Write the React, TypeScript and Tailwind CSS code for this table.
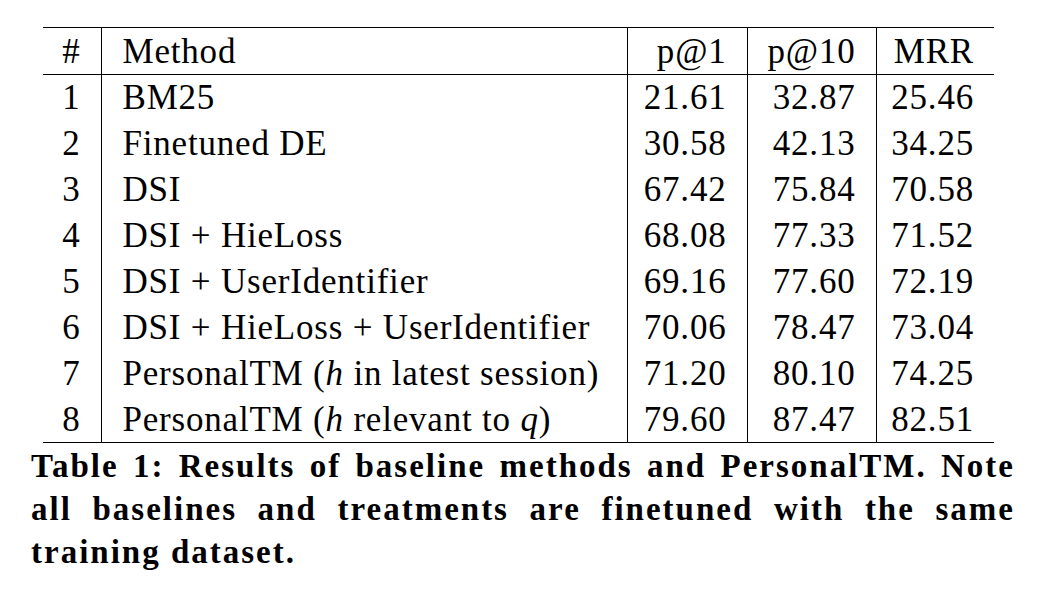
const rows = [
  { n: "1", method: <>BM25</>, p1: "21.61", p10: "32.87", mrr: "25.46" },
  { n: "2", method: <>Finetuned DE</>, p1: "30.58", p10: "42.13", mrr: "34.25" },
  { n: "3", method: <>DSI</>, p1: "67.42", p10: "75.84", mrr: "70.58" },
  { n: "4", method: <>DSI + HieLoss</>, p1: "68.08", p10: "77.33", mrr: "71.52" },
  { n: "5", method: <>DSI + UserIdentifier</>, p1: "69.16", p10: "77.60", mrr: "72.19" },
  { n: "6", method: <>DSI + HieLoss + UserIdentifier</>, p1: "70.06", p10: "78.47", mrr: "73.04" },
  {
    n: "7",
    method: <>PersonalTM (<i>h</i> in latest session)</>,
    p1: "71.20",
    p10: "80.10",
    mrr: "74.25",
  },
  {
    n: "8",
    method: <>PersonalTM (<i>h</i> relevant to <i>q</i>)</>,
    p1: "79.60",
    p10: "87.47",
    mrr: "82.51",
  },
];

export default function App() {
  return (
    <div className="w-[1042px] h-[600px] bg-white text-black [font-family:'Liberation_Serif',serif] pt-[27px] pl-[31px]">
      <table className="ml-[12px] w-[951px] table-fixed border-collapse text-[35px] tracking-[0.8px] leading-none">
        <colgroup>
          <col className="w-[58px]" />
          <col className="w-[526px]" />
          <col className="w-[120px]" />
          <col className="w-[129px]" />
          <col className="w-[118px]" />
        </colgroup>
        <thead>
          <tr className="h-[47px] border-t-[1.5px] border-b border-black">
            <th className="font-normal text-right pr-[20px] border-r border-black">#</th>
            <th className="font-normal text-left pl-[21px] border-r border-black">Method</th>
            <th className="font-normal text-right pr-[20px] border-r border-black">p@1</th>
            <th className="font-normal text-right pr-[20px] border-r border-black">p@10</th>
            <th className="font-normal text-right pr-[20px]">MRR</th>
          </tr>
        </thead>
        <tbody className="border-b-[1.5px] border-black">
          {rows.map((r) => (
            <tr key={r.n} className="h-[46px]">
              <td className="text-right pr-[20px] border-r border-black">{r.n}</td>
              <td className="text-left pl-[21px] border-r border-black whitespace-nowrap">{r.method}</td>
              <td className="text-right pr-[20px] border-r border-black">{r.p1}</td>
              <td className="text-right pr-[20px] border-r border-black">{r.p10}</td>
              <td className="text-right pr-[20px]">{r.mrr}</td>
            </tr>
          ))}
        </tbody>
      </table>
      <div className="w-[984px] mt-[2px] font-bold text-[33px] tracking-[2px] leading-[43px]">
        <div className="text-justify [text-align-last:justify]">
          Table 1: Results of baseline methods and PersonalTM. Note
        </div>
        <div className="text-justify [text-align-last:justify]">
          all baselines and treatments are finetuned with the same
        </div>
        <div>training dataset.</div>
      </div>
    </div>
  );
}
